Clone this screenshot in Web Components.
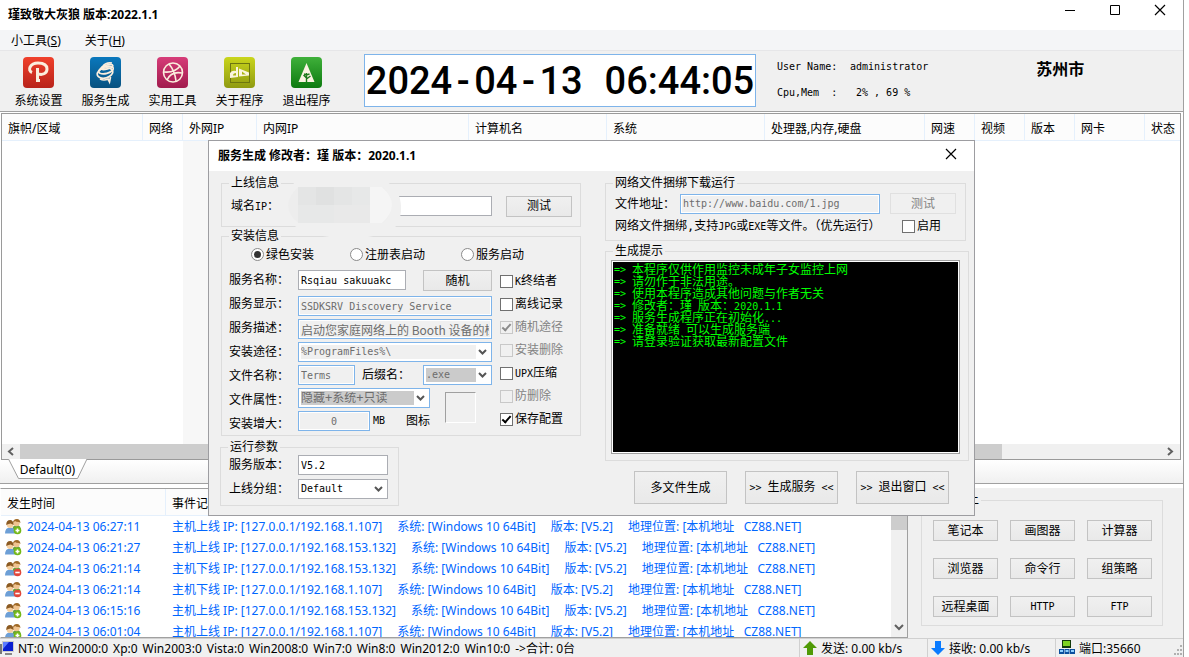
<!DOCTYPE html>
<html lang="zh-CN">
<head>
<meta charset="utf-8">
<title>瑾致敬大灰狼 版本:2022.1.1</title>
<style>
html,body{margin:0;height:100%;background:#fff;overflow:hidden}
body{font:12px/16px "Noto Sans","Noto Sans CJK SC",sans-serif;color:#000}
</style>
</head>
<body>
<app-window></app-window>
<script>
const SONG = '12px/12px "DejaVu Sans Mono","Noto Sans CJK SC",monospace';
const define = (name, html, setup) => customElements.define(name, class extends HTMLElement {
  constructor() {
    super();
    const t = document.createElement('template');
    t.innerHTML = html;
    this.attachShadow({ mode: 'open' }).append(t.content.cloneNode(true));
  }
  connectedCallback() { if (setup) setup(this, this.shadowRoot); }
});

/* ---------- basic controls ---------- */

define('ui-button', `
<style>
:host{display:block;height:21px}
button{box-sizing:border-box;width:100%;height:100%;margin:0;padding:0;border:1px solid #c3c3c3;
 background:linear-gradient(#f0f0f0,#e9e9e9);font:inherit;color:#000;white-space:pre}
button:disabled{color:#838383;border-color:#e0e0e0;background:#f0f0f0}
</style>
<button type="button"><slot></slot></button>`, (el, r) => {
  r.querySelector('button').disabled = el.hasAttribute('disabled');
});

define('ui-check', `
<style>
:host{display:block}
label{display:flex;align-items:center;gap:2px;height:14px;white-space:nowrap}
input{appearance:none;box-sizing:border-box;flex:none;width:13px;height:13px;margin:0;border:1px solid #707070;background:#fff;
 display:grid;place-items:center}
input[type=radio]{border-radius:50%;border-color:#8a8a8a}
input[type=radio]:checked::before{content:"";width:7px;height:7px;border-radius:50%;background:#333}
input[type=checkbox]:checked::before{content:"";width:7px;height:3px;border:solid #000;border-width:0 0 2px 2px;transform:translate(0,-1px) rotate(-48deg)}
:host([disabled]){color:#838383}
input:disabled{border-color:#c8c8c8;background:#f0f0f0}
input:disabled:checked::before{border-color:#8a8a8a}
</style>
<label><input><span><slot></slot></span></label>`, (el, r) => {
  const i = r.querySelector('input');
  i.type = el.getAttribute('type') || 'checkbox';
  i.checked = el.hasAttribute('checked');
  i.disabled = el.hasAttribute('disabled');
});

define('ui-group', `
<style>
:host{display:block}
fieldset{box-sizing:border-box;min-width:0;width:100%;height:100%;margin:0;padding:0;border:1px solid #dcdcdc}
legend{margin-left:7px;padding:0 2px;height:12px;line-height:12px;min-width:8px}
</style>
<fieldset><legend></legend><slot></slot></fieldset>`, (el, r) => {
  r.querySelector('legend').textContent = el.getAttribute('caption');
});

define('ui-select', `
<style>
:host{display:flex;box-sizing:border-box;align-items:center;height:20px;padding:2px;border:1px solid #abadb3;background:#fff}
:host([tone=blue]){border-color:#7eb4ea}
::slotted(select){appearance:none;flex:1;min-width:0;height:14px;margin:0;padding:0;border:0;border-radius:0;
 background:var(--fill,#fff);color:inherit;font:inherit;opacity:1}
svg{flex:none;width:13px;height:12px}
</style>
<slot></slot><svg viewBox="0 0 13 12"><path d="M3 4l3.500 3.500L10 4" fill="none" stroke="#555" stroke-width="2"/></svg>`);

/* ---------- toolbar ---------- */

const ICONS = {
  path: ['#f0402a', '#b8231b', '<path d="M9 15.500c-5-2-2-9.500 6-9.500 6 0 9 2.500 9 6 0 5-5 6-8.500 5M14.500 11v12.500h2.500" fill="none" stroke="#fbeedd" stroke-width="3"/>'],
  spring: ['#0a78bd', '#08517f', '<g fill="none" stroke="#fbeedd" stroke-width="1.700"><path d="M13 9q3-4 9-3"/><ellipse cx="17" cy="10" rx="6" ry="2" transform="rotate(-15 17 10)"/><ellipse cx="16" cy="13" rx="7.500" ry="3.500" transform="rotate(-15 16 13)"/><ellipse cx="15" cy="16" rx="8" ry="5" transform="rotate(-15 15 16)"/><path d="M10 22q4 2 8 0l1.500 3 1-5"/></g>'],
  ball: ['#d63c78', '#a11b4d', '<g fill="none" stroke="#fbeedd" stroke-width="1.600"><circle cx="16" cy="15.500" r="9.500"/><path d="M12 7q6 7 7 17M7 15q11 1 16-6M10 23q4-9 15-7"/></g>'],
  art: ['#c9d51b', '#8f9a12', '<rect x="6.500" y="6.500" width="19" height="19" fill="none" stroke="#6d7610"/><path d="M6 21v-5q2-3 6-2v-4h2v10zM9 18.500h3v-2.500q-3 0-3 2.500zM15 19.500v-8l10 4v3zM18 17.500h4l-4-3z" fill="#fbf5dd" fill-rule="evenodd"/>'],
  tree: ['#3fb03a', '#0d7a10', '<path d="M15.500 6l8 19h-16z" fill="#fbf3e2"/><path d="M15.500 25v-9M15.500 22l4-3M15.500 21l-3-3M13 17l2.500 1 3-1" stroke="#1f7a1c" stroke-width="1.400" fill="none"/>']
};

define('tool-button', `
<style>
:host{display:block;width:67px}
button{display:flex;flex-direction:column;align-items:center;gap:5px;width:100%;margin:0;padding:0;border:0;background:none;font:inherit;color:inherit}
svg{width:31px;height:31px}
</style>
<button type="button"><span></span><slot></slot></button>`, (el, r) => {
  const k = el.getAttribute('icon'), [a, b, art] = ICONS[k];
  const s = r.querySelector('span');
  s.style.height = '31px';
  s.innerHTML = `<svg viewBox="0 0 31 31"><defs><linearGradient id="g" x2="0" y2="1"><stop stop-color="${a}"/><stop offset="1" stop-color="${b}"/></linearGradient></defs><rect width="31" height="31" rx="4" fill="url(#g)"/>${art}</svg>`;
});

define('digital-clock', `
<style>
:host{display:flex;align-items:center;justify-content:center;box-sizing:border-box;width:392px;height:53px;border:1px solid #7eb4ea;background:#fff}
time{display:flex;font:500 38px/50px Roboto,"Liberation Sans",sans-serif;white-space:pre}
i{font-style:normal;display:block;width:22px;text-align:center}
i.c{width:10px}
</style>
<time datetime="2024-04-13T06:44:05"><span>2024</span><i>-</i><span>04</span><i>-</i><span>13</span><i> </i><span>06</span><i class="c">:</i><span>44</span><i class="c">:</i><span>05</span></time>`);

define('main-toolbar', `
<style>
:host{display:flex;height:60px;background:#f0f0f0;border-bottom:1px solid #a0a0a0}
nav{display:flex;padding:6px 0 0 5px}
digital-clock{margin:3px 0 0 24px}
.info{display:grid;grid-template-columns:73px auto;align-content:start;row-gap:14px;margin:10px 0 0 21px;font:10px/12px "DejaVu Sans Mono",monospace;white-space:pre}
.city{margin:6px 0 0 108px;font:bold 16px/22px "Noto Sans CJK SC",sans-serif}
</style>
<nav>
<tool-button icon="path">系统设置</tool-button><tool-button icon="spring">服务生成</tool-button><tool-button icon="ball">实用工具</tool-button><tool-button icon="art">关于程序</tool-button><tool-button icon="tree">退出程序</tool-button>
</nav>
<digital-clock></digital-clock>
<div class="info"><span>User Name:</span><span>administrator</span><span>Cpu,Mem  :</span><span> 2% , 69 %</span></div>
<div class="city">苏州市</div>`);

/* ---------- host list ---------- */

define('h-scroll', `
<style>
:host{display:flex;align-items:center;height:15px;background:#f0f0f0}
svg{flex:none;width:18px;height:15px}
.track{flex:1;height:100%}
.thumb{width:86%;height:100%;background:#cdcdcd}
</style>
<svg viewBox="0 0 18 15"><path d="M11 4L7 7.500l4 3.500" fill="none" stroke="#606060" stroke-width="2"/></svg>
<div class="track"><div class="thumb"></div></div>
<svg viewBox="0 0 18 15"><path d="M6 4l4 3.500L6 11" fill="none" stroke="#606060" stroke-width="2"/></svg>`);

define('host-list', `
<style>
:host{display:flex;flex-direction:column;min-height:0;margin:1px 2px 0 1px;border:1px solid #9a9a9a;background:#fff}
.view{flex:1;min-height:0;overflow:hidden}
table{width:100%;height:100%;table-layout:fixed;border-collapse:separate;border-spacing:0}
th{box-sizing:border-box;height:27px;padding:3px 0 0 6px;text-align:left;font-weight:normal;background:#fcfcfc;border-right:1px solid #e5f0fc;border-bottom:1px solid #e5f0fc;white-space:nowrap;overflow:hidden}
th:last-child{border-right:0}
td{padding:0}
td.sorted{background:#f7f7f7}
</style>
<div class="view"><table>
<colgroup><col width="141"><col width="40"><col width="74"><col width="212"><col width="138"><col width="158"><col width="160"><col width="50"><col width="50"><col width="50"><col width="70"><col></colgroup>
<thead><tr><th>旗帜/区域</th><th>网络</th><th>外网IP</th><th>内网IP</th><th>计算机名</th><th>系统</th><th>处理器,内存,硬盘</th><th>网速</th><th>视频</th><th>版本</th><th>网卡</th><th>状态</th></tr></thead>
<tbody><tr><td></td><td></td><td class="sorted"></td><td colspan="9"></td></tr></tbody>
</table></div>
<h-scroll></h-scroll>`);

define('group-tabs', `
<style>
:host{display:block;height:23px;background:linear-gradient(#fff,#f0f0f0);border-bottom:1px solid #a0a0a0;padding-left:8px}
a{display:block;position:relative;width:79px;height:20px;line-height:19px;text-align:center;color:#000;text-decoration:none}
svg{position:absolute;inset:-1px 0 0 0;width:79px;height:21px;z-index:0}
span{position:relative}
</style>
<a href="#default"><svg viewBox="0 0 79 21"><path d="M.500 0l10 19.500h59L79 0z" fill="#fff"/><path d="M.500 0l10 19.500h59L79 0" fill="none" stroke="#a0a0a0"/></svg><span>Default(0)</span></a>`);

/* ---------- event log ---------- */

define('user-icon', `
<style>:host{display:block;width:17px;height:16px}svg{display:block}</style>
<svg width="17" height="16" viewBox="0 0 17 16">
<path d="M7 12q0-6 5-6 4 0 4 6z" fill="#6aa23c"/><circle cx="11.500" cy="4" r="3.200" fill="#f0c490"/><path d="M8 4q0-4 4-4 3 0 3.500 4l-1.500-1q-3 0-4-1z" fill="#a06a28"/>
<path d="M0 14.500q0-6 5-6t6 6z" fill="#6d9fd6"/><circle cx="5" cy="5.500" r="3.400" fill="#f6cf9f"/><path d="M1.200 6q0-5 4-5 3 0 3.500 5l-3-1.500q-2 0-4.500 1.500z" fill="#8b5a22"/>
<circle id="b" cx="12.500" cy="11.500" r="3.800"/><path id="s" stroke="#fff" stroke-width="1.600"/></svg>`, (el, r) => {
  const on = el.hasAttribute('online');
  r.getElementById('b').setAttribute('fill', on ? '#74b816' : '#e2463a');
  r.getElementById('s').setAttribute('d', on ? 'M10.500 11.500h4M12.500 9.500v4' : 'M10.300 11.500h4.400');
});

define('event-log', `
<style>
:host{display:flex;min-height:0;border:1px solid #a0a0a0;border-left-color:#fff;background:#fff;overflow:hidden}
.view{flex:1;min-width:0;overflow:hidden}
table{width:100%;table-layout:fixed;border-spacing:0}
th{box-sizing:border-box;height:27px;padding:3px 6px 0;text-align:left;font-weight:normal;background:#fcfcfc;border-right:1px solid #e5f0fc;border-bottom:1px solid #e5f0fc}
td{height:21px;padding:0 4px;color:#06f;white-space:nowrap;overflow:hidden}
td+td{padding:0 6px}
.t,.m{display:flex;align-items:center;height:21px;line-height:18px}
.t{gap:5px}
.m{gap:15px}
.vs{display:flex;flex-direction:column;justify-content:space-between;width:16px;background:#f0f0f0}
.vs::before{content:"";height:41px;background:#cdcdcd}
.vs svg{width:16px;height:20px}
</style>
<div class="view"><table><colgroup><col width="165"><col></colgroup>
<thead><tr><th>发生时间</th><th>事件记录</th></tr></thead><tbody></tbody></table></div>
<div class="vs"><svg viewBox="0 0 16 20"><path d="M4 8l4 4 4-4" fill="none" stroke="#606060" stroke-width="2"/></svg></div>`, (el, r) => {
  const rows = [['06:27:11', 1, '1.107'], ['06:21:27', 1, '153.132'], ['06:21:14', 0, '153.132'], ['06:21:14', 0, '1.107'], ['06:15:16', 1, '153.132'], ['06:01:04', 1, '1.107']];
  r.querySelector('tbody').innerHTML = rows.map(([t, on, ip]) => `<tr><td><div class="t"><user-icon ${on ? 'online' : ''}></user-icon><span>2024-04-13 ${t}</span></div></td>
  <td><div class="m"><span>主机${on ? '上' : '下'}线 IP: [127.0.0.1/192.168.${ip}]</span><span>系统: [Windows 10 64Bit]</span><span>版本: [V5.2]</span><span>地理位置: [本机地址&nbsp;&nbsp; CZ88.NET]</span></div></td></tr>`).join('');
});

define('quick-tools', `
<style>
:host{display:block;padding:6px 20px 0 13px;font:${SONG};background:#f0f0f0}
ui-group{height:132px}
.grid{display:grid;grid-template-columns:repeat(3,65px);justify-content:space-between;gap:17px 0;padding:14px 10px 0 11px}
.l{font-size:10px}
</style>
<ui-group caption="　　　上"><div class="grid">
<ui-button>笔记本</ui-button><ui-button>画图器</ui-button><ui-button>计算器</ui-button>
<ui-button>浏览器</ui-button><ui-button>命令行</ui-button><ui-button>组策略</ui-button>
<ui-button>远程桌面</ui-button><ui-button><span class="l">HTTP</span></ui-button><ui-button><span class="l">FTP</span></ui-button>
</div></ui-group>`);

define('status-bar', `
<style>
:host{display:flex;height:18px;border-top:1px solid #d0d0d0;background:#f0f0f0;white-space:nowrap;line-height:19px}
div{display:flex;align-items:center;gap:4px;box-sizing:border-box;padding-left:3px;border-left:1px solid #d0d0d0}
.all{flex:1;gap:5px;padding-left:0;border:0}
.all svg{margin-right:-2px}
.net{width:128px}
svg{flex:none}
.grip{margin-left:auto}
</style>
<div class="all"><svg width="15" height="16" viewBox="0 0 15 16"><path d="M0 4h2v10H0z" fill="#777"/><path d="M2 1h12v11H2z" fill="#ccc"/><path d="M3 2h10v9H3z" fill="#0a1fd0"/><path d="M3 2h6L3 9z" fill="#5b7bff"/><path d="M5 13h7v2H5z" fill="#888"/></svg><span>NT:0</span><span>Win2000:0</span><span>Xp:0</span><span>Win2003:0</span><span>Vista:0</span><span>Win2008:0</span><span>Win7:0</span><span>Win8:0</span><span>Win2012:0</span><span>Win10:0</span><span>-&gt;合计: 0台</span></div>
<div class="net"><svg width="14" height="16" viewBox="0 0 14 16"><path d="M7 1l7 7h-4v7H4V8H0z" fill="#4f9a06"/></svg><span>发送: 0.00 kb/s</span></div>
<div class="net"><svg width="14" height="16" viewBox="0 0 14 16"><path d="M7 15l7-7h-4V1H4v7H0z" fill="#0a7bff"/></svg><span>接收: 0.00 kb/s</span></div>
<div class="net"><svg width="16" height="16" viewBox="0 0 16 16"><path d="M3 0h9v8H3z" fill="#123a0a"/><path d="M4 1h7v5H4z" fill="#7ed321"/><path d="M0 9h5v5H0zM5.500 9h5v5h-5zM11 9h5v5h-5z" fill="#0b4f9e"/><path d="M1 10h3v2H1zM6.500 10h3v2h-3zM12 10h3v2h-3z" fill="#8fd0ff"/></svg><span>端口:35660</span>
<svg class="grip" width="10" height="16" viewBox="0 0 10 16"><path d="M7 5h2v2H7zM4 9h2v2H4zM7 9h2v2H7zM1 13h2v2H1zM4 13h2v2H4zM7 13h2v2H7z" fill="#b0b0b0"/></svg></div>`);

/* ---------- service builder dialog ---------- */

const FORM = `
*{box-sizing:border-box}
.l{font-size:10px}
label{white-space:nowrap}
input{height:20px;margin:0;padding:0 2px;border:1px solid #abadb3;border-radius:0;background:#fff;font:inherit;color:#000;min-width:0;outline:0}
input.l,select.l{font-size:10px}
input:disabled{border-color:#7eb4ea;background:#f0f0f0;color:#6d6d6d;box-shadow:inset 0 0 0 1px #fff}
ui-select[tone=blue]{color:#6d6d6d}
.row{display:flex;align-items:center}`;

define('online-panel', `
<style>${FORM}
:host{display:block;position:relative}
ui-group{height:50px}
.row{gap:14px;padding:6px 8px 0 9px;height:28px}
input{flex:1}
label{width:53px}
ui-button{width:66px}
svg{position:absolute;left:63px;top:-1px}
</style>
<ui-group caption="上线信息"><div class="row"><label for="ip">域名<span class="l">IP</span>：</label><input id="ip"><ui-button>测试</ui-button></div></ui-group>
<svg width="117" height="65" viewBox="0 0 117 65"><path d="M12 5L101 5Q116 12 117 30Q118 48 106 56Q60 70 18 54Q0 46 0 30Q1 15 12 5z" fill="#f0f0f0"/>
<path d="M14 11h85q18 19 0 36H14Q-6 30 14 11z" fill="#ededed"/><path d="M14 11h18v18H14zM50 11h18v18H50z" fill="#e4e5e5"/><path d="M32 11h18v18H32z" fill="#e0e1e1"/><path d="M68 11h18v18H68zM14 29h36v18H14z" fill="#e7e8e8"/><path d="M50 29h36v18H50z" fill="#e9e9e9"/><path d="M86 11h12q20 18 0 36H86z" fill="#f5f5f5"/></svg>`);

define('install-panel', `
<style>${FORM}
:host{display:block}
ui-group{height:206px}
.radios{display:grid;grid-template-columns:99px 111px auto;padding-left:29px;height:25px;align-items:center}
.cols{display:flex;padding-left:7px}
.labels{display:flex;flex-direction:column;width:69px}
.labels label{height:24px;line-height:26px}
.fields{display:flex;flex-direction:column;gap:3px;width:194px;padding-top:3px}
.first{justify-content:space-between;height:23px;align-items:start}
.checks{display:flex;flex-direction:column;gap:9px;padding:7px 0 0 8px}
.pair{display:flex;gap:15px}
.left{display:flex;flex-direction:column;gap:3px;width:132px}
.name{gap:7px}
.icon{width:31px;height:31px;margin-top:4px;border:1px solid #a0a0a0;border-right-color:#fff;border-bottom-color:#fff}
.size{gap:3px}
.size span:last-child{margin-left:auto}
ui-button{width:69px}
#name{width:108px}#file{width:57px}#size{width:72px;text-align:center}
#desc{font-family:"Noto Sans CJK SC",sans-serif}
ui-select{--fill:#cbcbcb}
.plain{--fill:#f0f0f0}
.ext{width:69px;margin-left:auto}
</style>
<ui-group caption="安装信息">
<div class="radios"><ui-check type="radio" checked>绿色安装</ui-check><ui-check type="radio">注册表启动</ui-check><ui-check type="radio">服务启动</ui-check></div>
<div class="cols">
<div class="labels"><label for="name">服务名称：</label><label for="disp">服务显示：</label><label for="desc">服务描述：</label><label for="dir">安装途径：</label><label for="file">文件名称：</label><label for="attr">文件属性：</label><label for="size">安装增大：</label></div>
<div class="fields">
<div class="row first"><input id="name" class="l" value="Rsqiau sakuuakc"><ui-button>随机</ui-button></div>
<input id="disp" class="l" disabled value="SSDKSRV Discovery Service">
<input id="desc" disabled value="启动您家庭网络上的 Booth 设备的检测">
<ui-select tone="blue" class="plain"><select id="dir" class="l" disabled><option>%ProgramFiles%\\</option></select></ui-select>
<div class="row name"><input id="file" class="l" disabled value="Terms"><label for="ext">后缀名：</label><ui-select tone="blue" class="ext"><select id="ext" class="l" disabled><option>.exe</option></select></ui-select></div>
<div class="pair"><div class="left"><ui-select tone="blue"><select id="attr" disabled><option>隐藏+系统+只读</option></select></ui-select>
<div class="row size"><input id="size" class="l" disabled value="0"><span class="l">MB</span><span>图标</span></div></div><div class="icon"></div></div>
</div>
<div class="checks"><ui-check><span class="l">K</span>终结者</ui-check><ui-check>离线记录</ui-check><ui-check checked disabled>随机途径</ui-check><ui-check disabled>安装删除</ui-check><ui-check><span class="l">UPX</span>压缩</ui-check><ui-check disabled>防删除</ui-check><ui-check checked>保存配置</ui-check></div>
</div></ui-group>`);

define('run-panel', `
<style>${FORM}
:host{display:block;width:179px}
ui-group{height:65px}
.grid{display:grid;grid-template-columns:69px 90px;grid-auto-rows:20px;gap:4px 0;padding:2px 0 0 8px;align-items:center}
</style>
<ui-group caption="运行参数"><div class="grid"><label for="ver">服务版本：</label><input id="ver" class="l" value="V5.2"><label for="grp">上线分组：</label><ui-select><select id="grp" class="l"><option>Default</option></select></ui-select></div></ui-group>`);

define('bind-panel', `
<style>${FORM}
:host{display:block;width:361px}
ui-group{height:64px}
.row{gap:10px;padding:3px 9px 0 9px;height:26px}
.note{height:22px;padding-top:0;justify-content:space-between;padding-right:24px}
input{flex:1}
label{width:55px}
ui-button{width:66px}
</style>
<ui-group caption="网络文件捆绑下载运行"><div class="row"><label for="url">文件地址：</label><input id="url" class="l" disabled value="http://www.baidu.com/1.jpg"><ui-button disabled>测试</ui-button></div>
<div class="row note"><span>网络文件捆绑,支持<span class="l">JPG</span>或<span class="l">EXE</span>等文件。（优先运行）</span><ui-check>启用</ui-check></div></ui-group>`);

define('hint-console', `
<style>
:host{display:block}
ui-group{height:216px}
.screen{box-sizing:border-box;height:194px;margin:3px 8px 0 5px;padding:1px;border:1px solid #a0a0a0;background:#fff}
pre{box-sizing:border-box;height:100%;margin:0;padding:2px 1px;background:#000;color:#0f0;font:inherit;overflow:hidden}
div.ln{height:12px;display:flex;gap:6px;align-items:center;white-space:pre}
.l{font-size:10px}
</style>
<ui-group caption="生成提示"><div class="screen"><pre></pre></div></ui-group>`, (el, r) => {
  r.querySelector('pre').innerHTML = ['本程序仅供作用监控未成年子女监控上网', '请勿作于非法用途。', '使用本程序造成其他问题与作者无关', '修改者：瑾<span class="l"> </span>版本：<span class="l">2020.1.1</span>', '服务生成程序正在初始化<span class="l">...</span>', '准备就绪<span class="l"> </span>可以生成服务端', '请登录验证获取最新配置文件']
    .map(t => `<div class="ln"><span class="l">=&gt;</span><span>${t}</span></div>`).join('');
});

define('builder-dialog', `
<style>
:host{display:block;box-sizing:border-box;border:1px solid #9d9da1;background:#f0f0f0;font:${SONG}}
header{display:flex;justify-content:space-between;height:30px;padding:0 17px 0 9px;background:#fff;font:bold 12px/30px "Noto Sans","Noto Sans CJK SC",sans-serif}
header button{margin:0;padding:4px 0 0;border:0;background:none;height:22px}
svg{display:block}
main{display:flex;justify-content:space-between;padding:6px 5px 9px 12px}
.a{display:flex;flex-direction:column;width:360px;gap:3px}
.a run-panel{margin:2px 0 0 -1px}
.b{display:flex;flex-direction:column;width:364px;gap:4px}
.act{display:flex;gap:18px;padding:6px 0 0 29px}
.act ui-button{width:93px;height:33px}
.l{font-size:10px}
</style>
<header><span>服务生成 修改者：瑾 版本：2020.1.1</span><button type="button" aria-label="关闭"><svg width="12" height="12" viewBox="0 0 12 12"><path d="M1 1l10 10M11 1L1 11" stroke="#000" stroke-width="1.200"/></svg></button></header>
<main><div class="a"><online-panel></online-panel><install-panel></install-panel><run-panel></run-panel></div>
<div class="b"><bind-panel></bind-panel><hint-console></hint-console><div class="act"><ui-button>多文件生成</ui-button><ui-button><span class="l">&gt;&gt; </span>生成服务<span class="l"> &lt;&lt;</span></ui-button><ui-button><span class="l">&gt;&gt; </span>退出窗口<span class="l"> &lt;&lt;</span></ui-button></div></div></main>`);

/* ---------- main window ---------- */

define('app-window', `
<style>
:host{display:flex;flex-direction:column;position:relative;box-sizing:border-box;height:100vh;margin-right:5px;border-right:1px solid #a0a0a0;background:#fff}
header{display:flex;justify-content:space-between;height:30px;padding:0 17px 0 8px;font-weight:bold;line-height:29px}
.ctl{display:flex;gap:33px;padding-top:4px}
.ctl button{margin:0;padding:0;border:0;background:none;width:12px;height:12px}
.ctl svg{display:block}
.menu{display:flex;gap:24px;height:20px;padding-left:11px;background:#f4f5f7;border-bottom:1px solid #e6e6e8;line-height:21px}
.menu a{color:#000;text-decoration:none}
host-list{flex:1}
.bottom{display:grid;grid-template-columns:908px 1fr;height:150px;margin-top:4px;background:#f0f0f0}
event-log{min-width:0}
builder-dialog{position:absolute;left:208px;top:140px;width:767px}
</style>
<header><span>瑾致敬大灰狼 版本:2022.1.1</span><div class="ctl">
<button type="button" aria-label="最小化"><svg width="12" height="12" viewBox="0 0 12 12"><path d="M1 6.500h10" stroke="#000"/></svg></button>
<button type="button" aria-label="最大化"><svg width="12" height="12" viewBox="0 0 12 12"><path d="M1.500 1.500h9v9h-9z" fill="none" stroke="#000"/></svg></button>
<button type="button" aria-label="关闭"><svg width="12" height="12" viewBox="0 0 12 12"><path d="M1 1l10 10M11 1L1 11" stroke="#000" stroke-width="1.200"/></svg></button></div></header>
<nav class="menu"><a href="#tools">小工具(<u>S</u>)</a><a href="#about">关于(<u>H</u>)</a></nav>
<main-toolbar></main-toolbar>
<host-list></host-list>
<group-tabs></group-tabs>
<div class="bottom"><event-log></event-log><quick-tools></quick-tools></div>
<status-bar></status-bar>
<builder-dialog></builder-dialog>`);
</script>
</body>
</html>
